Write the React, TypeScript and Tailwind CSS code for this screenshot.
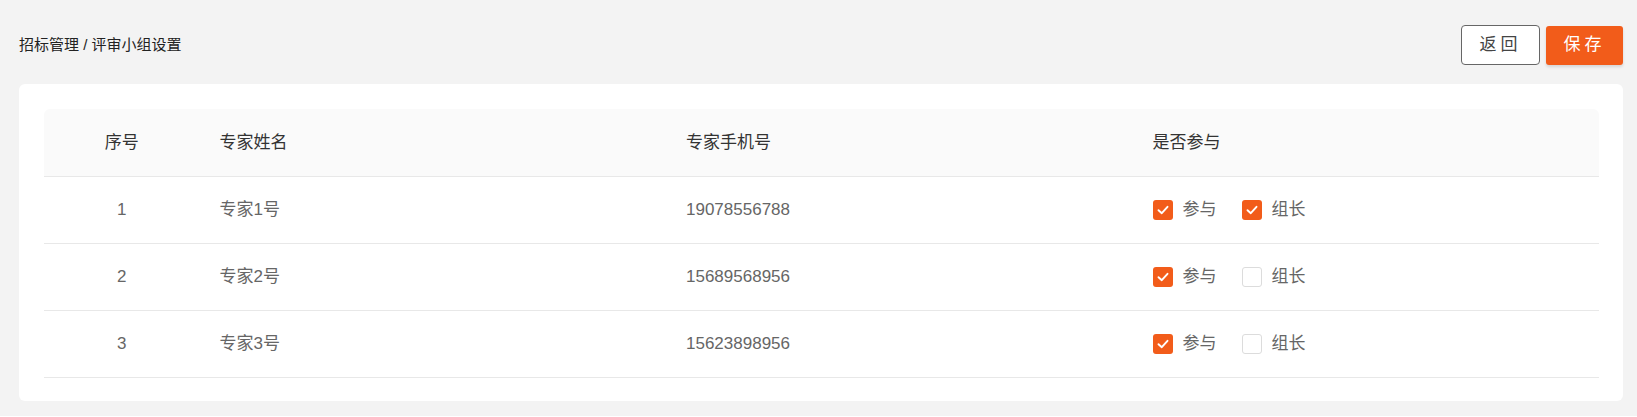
import { useState } from 'react';

const EXPERTS = [
  { id: 1, name: '专家1号', phone: '19078556788', join: true, leader: true },
  { id: 2, name: '专家2号', phone: '15689568956', join: true, leader: false },
  { id: 3, name: '专家3号', phone: '15623898956', join: true, leader: false },
];

function CheckBox({ checked, label, onChange }: { checked: boolean; label: string; onChange: () => void }) {
  return (
    <label className="flex items-center gap-[10px] cursor-pointer select-none" onClick={onChange}>
      {checked ? (
        <span className="w-[20px] h-[20px] rounded-[3px] bg-[#f25c1a] flex items-center justify-center">
          <svg width="14" height="14" viewBox="0 0 14 14" fill="none">
            <polyline points="2.5,7.2 5.8,10.2 11.5,3.8" stroke="#fff" strokeWidth="1.9" strokeLinecap="round" strokeLinejoin="round" />
          </svg>
        </span>
      ) : (
        <span className="w-[20px] h-[20px] rounded-[3px] bg-white border border-[#dcdcdc]" />
      )}
      <span className="text-[17px] text-[#666]">{label}</span>
    </label>
  );
}

export default function App() {
  const [rows, setRows] = useState(EXPERTS);

  const toggle = (id: number, key: 'join' | 'leader') =>
    setRows(rs => rs.map(r => (r.id === id ? { ...r, [key]: !r[key] } : r)));

  return (
    <div
      className="w-full bg-[#f3f3f3] pl-[19px] pr-[14px] pt-[25px] pb-[15px]"
      style={{ fontFamily: '"Liberation Sans", "Noto Sans CJK SC", sans-serif' }}
    >
      <div className="flex items-center justify-between h-[40px]">
        <div className="text-[15px] text-[#222]">招标管理 / 评审小组设置</div>
        <div className="flex items-center gap-[6px]">
          <button className="w-[79px] h-[40px] rounded-[4px] border border-[#666] bg-white text-[17px] tracking-[4px] text-[#444]">
            返回
          </button>
          <button className="w-[77px] h-[39px] rounded-[3px] bg-[#f25c1a] text-[17px] tracking-[4px] text-white shadow-[0_2px_3px_rgba(0,0,0,0.12)]">
            保存
          </button>
        </div>
      </div>

      <div className="mt-[19px] bg-white rounded-[6px] p-[25px] pr-[24px] pb-[23px]">
        <table className="w-full border-collapse table-fixed">
          <colgroup>
            <col className="w-[10%]" />
            <col className="w-[30%]" />
            <col className="w-[30%]" />
            <col className="w-[30%]" />
          </colgroup>
          <thead>
            <tr className="bg-[#fafafa] h-[67px] border-b border-[#e8e8e8] text-[17px] text-[#333]">
              <th className="font-normal text-center rounded-tl-[6px]">序号</th>
              <th className="font-normal text-left pl-[20px]">专家姓名</th>
              <th className="font-normal text-left pl-[20px]">专家手机号</th>
              <th className="font-normal text-left pl-[20px] rounded-tr-[6px]">是否参与</th>
            </tr>
          </thead>
          <tbody>
            {rows.map(r => (
              <tr key={r.id} className="h-[67px] border-b border-[#e8e8e8] text-[17px] text-[#666]">
                <td className="text-center">{r.id}</td>
                <td className="pl-[20px]">{r.name}</td>
                <td className="pl-[20px]">{r.phone}</td>
                <td className="pl-[20px]">
                  <div className="flex items-center gap-[25px]">
                    <CheckBox checked={r.join} label="参与" onChange={() => toggle(r.id, 'join')} />
                    <CheckBox checked={r.leader} label="组长" onChange={() => toggle(r.id, 'leader')} />
                  </div>
                </td>
              </tr>
            ))}
          </tbody>
        </table>
      </div>
    </div>
  );
}
